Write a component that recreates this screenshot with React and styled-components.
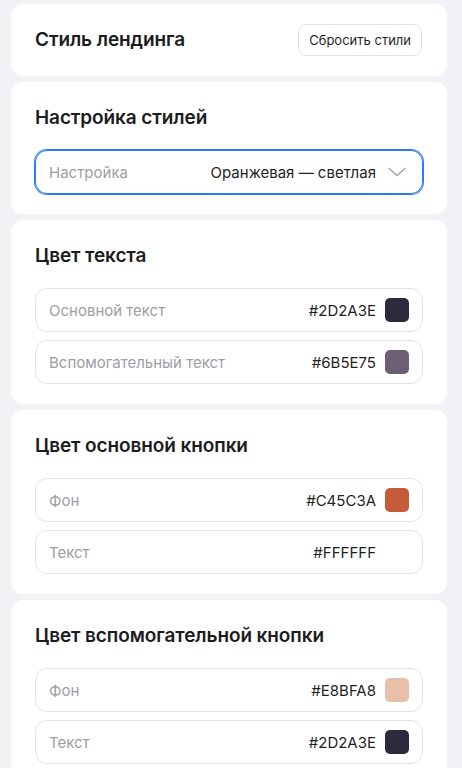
import React from 'react';
import styled, { createGlobalStyle } from 'styled-components';

const GlobalStyle = createGlobalStyle`
  html, body {
    margin: 0;
    padding: 0;
    background: #f0f2f6;
  }
  body {
    font-family: Inter, "Noto Sans", "Liberation Sans", sans-serif;
    color: #1f1f24;
    -webkit-font-smoothing: antialiased;
  }
`;

const Page = styled.div`
  display: flex;
  flex-direction: column;
  gap: 6px;
  padding: 4px 15px 0 11px;
`;

const Card = styled.section`
  background: #fff;
  border-radius: 12px;
  padding: ${({ $compact }) => ($compact ? '20px 24px' : '24px 24px 20px')};
  display: flex;
  flex-direction: ${({ $compact }) => ($compact ? 'row' : 'column')};
  align-items: ${({ $compact }) => ($compact ? 'center' : 'stretch')};
  justify-content: space-between;
  box-sizing: border-box;
  min-height: ${({ $compact }) => ($compact ? '72px' : 'auto')};
`;

const Title = styled.h2`
  margin: 0;
  font-size: 19px;
  line-height: 24px;
  font-weight: 600;
  letter-spacing: -0.1px;
  color: #1c1c21;
`;

const ResetButton = styled.button`
  height: 32px;
  padding: 0 10px;
  border: 1px solid #dfe0e4;
  border-radius: 9px;
  background: #fff;
  font-family: inherit;
  font-size: 13px;
  color: #1f1f24;
  cursor: pointer;
  margin-right: 1px;
`;

const Rows = styled.div`
  display: flex;
  flex-direction: column;
  gap: 8px;
  margin-top: 20px;
`;

const Field = styled.div`
  height: 44px;
  box-sizing: border-box;
  border: 1px solid ${({ $focused }) => ($focused ? '#2b7cf0' : '#e3e4e8')};
  box-shadow: ${({ $focused }) => ($focused ? '0 0 0 1px #2b7cf0' : 'none')};
  border-radius: 12px;
  display: flex;
  align-items: center;
  padding: ${({ $focused }) => ($focused ? '0 16px 0 13px' : '0 13px')};
  font-size: 15px;
`;

const Label = styled.span`
  color: #9c9ea6;
  flex: 1;
`;

const Value = styled.span`
  color: #1f1f24;
`;

const Swatch = styled.span`
  width: 24px;
  height: 24px;
  border-radius: 5px;
  margin-left: 9px;
  background: ${({ $color }) => $color};
`;

const ChevronIcon = styled.svg`
  margin-left: 12px;
  flex: none;
`;

const Chevron = () => (
  <ChevronIcon width="18" height="10" viewBox="0 0 18 10">
    <path d="M1 1.5 L9 8.5 L17 1.5" fill="none" stroke="#a3a5ad" strokeWidth="1.5" strokeLinecap="round" strokeLinejoin="round" />
  </ChevronIcon>
);

const ColorRow = ({ label, color }) => (
  <Field>
    <Label>{label}</Label>
    <Value>{color}</Value>
    <Swatch $color={color} />
  </Field>
);

const sections = [
  {
    title: 'Цвет текста',
    rows: [
      ['Основной текст', '#2D2A3E'],
      ['Вспомогательный текст', '#6B5E75'],
    ],
  },
  {
    title: 'Цвет основной кнопки',
    rows: [
      ['Фон', '#C45C3A'],
      ['Текст', '#FFFFFF'],
    ],
  },
  {
    title: 'Цвет вспомогательной кнопки',
    rows: [
      ['Фон', '#E8BFA8'],
      ['Текст', '#2D2A3E'],
    ],
  },
];

const App = () => (
  <>
    <GlobalStyle />
    <Page>
      <Card $compact>
        <Title>Стиль лендинга</Title>
        <ResetButton>Сбросить стили</ResetButton>
      </Card>
      <Card>
        <Title>Настройка стилей</Title>
        <Rows>
          <Field $focused>
            <Label>Настройка</Label>
            <Value>Оранжевая — светлая</Value>
            <Chevron />
          </Field>
        </Rows>
      </Card>
      {sections.map((s) => (
        <Card key={s.title}>
          <Title>{s.title}</Title>
          <Rows>
            {s.rows.map(([label, color]) => (
              <ColorRow key={label} label={label} color={color} />
            ))}
          </Rows>
        </Card>
      ))}
    </Page>
  </>
);

export default App;
